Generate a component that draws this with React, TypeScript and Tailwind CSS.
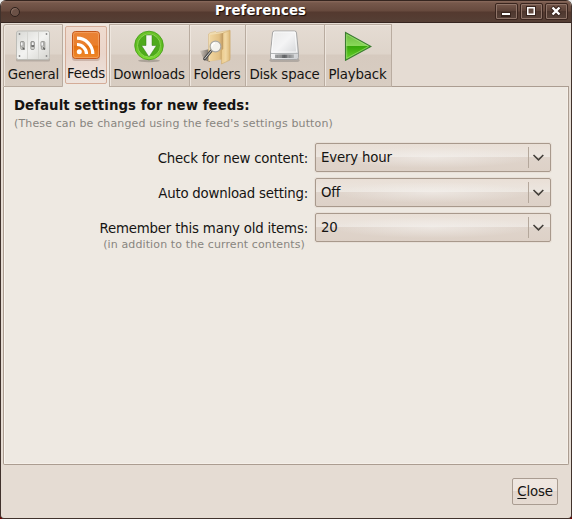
import React from "react";

function SwitchesIcon() {
  return (
    <svg width="36" height="34" viewBox="0 0 36 34" className="block">
      <defs>
        <linearGradient id="plate" x1="0" y1="0" x2="1" y2="1">
          <stop offset="0" stopColor="#d8d8d4" />
          <stop offset=".5" stopColor="#f3f3f1" />
          <stop offset="1" stopColor="#d4d4cf" />
        </linearGradient>
      </defs>
      <rect x="1" y="29" width="34" height="3.500" rx="1.5" fill="#8d8780" opacity=".45" />
      <rect x="1.5" y="2" width="33" height="28.500" rx="2" fill="url(#plate)" stroke="#bdbdb8" />
      <path d="M12.500 3v27M23.500 3v27" stroke="#d6d6d2" />
      {[7.5, 17.5, 28].map((x, i) => (
        <g key={x}>
          <rect x={x - 1.7} y="12.500" width="3.500" height="8" rx="1" fill="#d0d0cc" stroke="#8b8b88" strokeWidth=".8" />
          <rect x={i === 1 ? x - 1 : x - 2} y="13" width="2.500" height="4" fill="#f4f4f4" stroke="#858582" strokeWidth=".6" />
          <path d={i === 1 ? `M${x - 1} 17h2.500` : `M${x} 18.500l2 2`} stroke="#5c5c5a" strokeWidth="1.300" />
        </g>
      ))}
      {[4.5, 31.5].map((x) =>
        [5, 27].map((y) => <circle key={`${x}-${y}`} cx={x} cy={y} r=".9" fill="#888" />)
      )}
    </svg>
  );
}

function FeedIcon() {
  return (
    <svg width="30" height="32" viewBox="0 0 30 32" className="block">
      <defs>
        <linearGradient id="rss" x1="0" y1="0" x2="0" y2="1">
          <stop offset="0" stopColor="#e98235" />
          <stop offset=".5" stopColor="#ea7f2c" />
          <stop offset=".55" stopColor="#e5700f" />
          <stop offset="1" stopColor="#f08a2c" />
        </linearGradient>
      </defs>
      <rect x="1" y="3" width="28" height="28" rx="3" fill="#a08070" opacity=".4" />
      <rect x="1.500" y="1.500" width="27" height="27" rx="3" fill="url(#rss)" stroke="#c4591b" />
      <rect x="2.500" y="2.500" width="25" height="25" rx="2" fill="none" stroke="#f7ad74" opacity=".6" />
      <circle cx="8.300" cy="21.800" r="2.500" fill="#fff" />
      <path d="M6 14.500a9.500 9.500 0 0 1 9.500 9.500M6 8.200a15.800 15.800 0 0 1 15.800 15.800" fill="none" stroke="#fff" strokeWidth="3.200" />
    </svg>
  );
}

function DownloadIcon() {
  return (
    <svg width="32" height="34" viewBox="0 0 32 34" className="block">
      <defs>
        <linearGradient id="disc" x1="0" y1="0" x2="0" y2="1">
          <stop offset="0" stopColor="#6fc52c" />
          <stop offset=".5" stopColor="#5fbd20" />
          <stop offset="1" stopColor="#83df35" />
        </linearGradient>
      </defs>
      <ellipse cx="16" cy="31.800" rx="11" ry="1.500" fill="#6c675f" opacity=".4" />
      <circle cx="16" cy="16.500" r="14.300" fill="url(#disc)" stroke="#3d9b12" strokeWidth=".8" />
      <circle cx="16" cy="16.500" r="11.500" fill="#4eaa1b" stroke="#8bd451" strokeWidth="1" />
      <path d="M13 6h6v10.500h4.500L16 28 8.500 16.500H13z" fill="#f5f5f2" stroke="#317f12" strokeWidth=".5" />
    </svg>
  );
}

function FolderIcon() {
  return (
    <svg width="34" height="36" viewBox="0 0 34 36" className="block">
      <defs>
        <linearGradient id="folder" x1="0" y1="0" x2="1" y2="0">
          <stop offset="0" stopColor="#eccb8d" />
          <stop offset=".5" stopColor="#f1d8a5" />
          <stop offset="1" stopColor="#dcb878" />
        </linearGradient>
        <linearGradient id="inside" x1="0" y1="0" x2="1" y2="0">
          <stop offset="0" stopColor="#f0d59f" />
          <stop offset=".7" stopColor="#e2c084" />
          <stop offset="1" stopColor="#bd9863" />
        </linearGradient>
        <linearGradient id="cast" x1="0" y1="0" x2="1" y2="0">
          <stop offset="0" stopColor="#514b43" stopOpacity=".1" />
          <stop offset="1" stopColor="#514b43" stopOpacity=".8" />
        </linearGradient>
      </defs>
      <path d="M0 22l10-2v13l-6-2z" fill="url(#cast)" />
      <path d="M8.500 5l2-1.500 5-1 1 1 13.500-2.300v28l-21.500 3z" fill="#f0dcb0" stroke="#d2b27c" strokeWidth=".5" />
      <path d="M10 6l13-2v26l-13 2z" fill="url(#inside)" />
      <path d="M23 4l7-2.500v29.500l-8.500 4V21l1.500-1z" fill="url(#folder)" stroke="#c9a566" strokeWidth=".5" />
      <path d="M11.500 21.500l-7 8.500" stroke="#4a4a49" strokeWidth="2.800" strokeLinecap="round" />
      <path d="M11.500 21.500l-7 8.500" stroke="#d5d5d3" strokeWidth="1" />
      <circle cx="15.500" cy="17.500" r="5.400" fill="#f4f2ed" stroke="#aaa8a2" strokeWidth="1.200" />
      <path d="M12 17.500a3.500 3.500 0 0 1 3-3.500" stroke="#fff" fill="none" strokeWidth="1.500" />
    </svg>
  );
}

function DiskIcon() {
  return (
    <svg width="34" height="34" viewBox="0 0 34 34" className="block">
      <defs>
        <linearGradient id="disk" x1="0" y1="0" x2="1" y2="1">
          <stop offset="0" stopColor="#e9e9e9" />
          <stop offset=".45" stopColor="#f4f4f5" />
          <stop offset="1" stopColor="#cbcdd0" />
        </linearGradient>
        <linearGradient id="slot" x1="0" y1="0" x2="1" y2="0">
          <stop offset="0" stopColor="#a0a2a4" />
          <stop offset=".5" stopColor="#606265" />
          <stop offset="1" stopColor="#b2b4b5" />
        </linearGradient>
      </defs>
      <rect x="1.500" y="29.500" width="30" height="3.500" rx="2" fill="#696969" opacity=".35" />
      <path d="M4.500 4q0-2 2-2h20q2 0 2 2l2 20v4.500q0 2-2 2H4.500q-2 0-2-2V24z" fill="url(#disk)" stroke="#a6a6a6" />
      <path d="M5.700 4q0-1 1-1h19.500q1 0 1 1l1.500 19h-25z" fill="none" stroke="#fff" opacity=".75" />
      <path d="M3 24.500h27" stroke="#b2b5b7" />
      <rect x="7" y="25.500" width="19" height="3.500" fill="url(#slot)" />
      <path d="M11 25.500v3.500M13 25.500v3.500M20 25.500v3.500" stroke="#bbb" strokeWidth=".7" />
    </svg>
  );
}

function PlayIcon() {
  return (
    <svg width="28" height="32" viewBox="0 0 28 32" className="block">
      <defs>
        <linearGradient id="play" x1="0" y1="0" x2="0" y2="1">
          <stop offset="0" stopColor="#65b83a" />
          <stop offset=".48" stopColor="#8bd95a" />
          <stop offset=".5" stopColor="#37a809" />
          <stop offset="1" stopColor="#6ad42f" />
        </linearGradient>
      </defs>
      <path d="M1.500 3.500L27 17.500 1.500 31.300z" fill="url(#play)" stroke="#3c7b32" strokeWidth="1.100" />
      <path d="M2.700 5.500L24.500 17.500 2.700 29.300z" fill="none" stroke="#a6e17e" strokeWidth=".8" opacity=".8" />
    </svg>
  );
}

const tabs = [
  { label: "Downloads", icon: <DownloadIcon />, width: "w-[80px]" },
  { label: "Folders", icon: <FolderIcon />, width: "w-[56px]" },
  { label: "Disk space", icon: <DiskIcon />, width: "w-[79px]" },
  { label: "Playback", icon: <PlayIcon />, width: "w-[67px]" },
];

function Tab({ label, icon, width, first = false }: { label: string; icon: React.ReactNode; width: string; first?: boolean }) {
  return (
    <div className={`${width} ${first ? "border-l rounded-tl-[3px]" : "pr-px"} h-[63px] shrink-0 border-t border-r border-b border-[#b9aca0] bg-[linear-gradient(#e5dcd3_0,#ded4ca_29px,#d6cabf_30px,#d8cdc2_62px)] shadow-[inset_1px_1px_0_#eee6de] flex flex-col items-center`}>
      <div className="h-[42px] pt-[4px]">{icon}</div>
      <div className={first ? "leading-[16px] pl-px" : "leading-[16px]"}>{label}</div>
    </div>
  );
}

function Combo({ value }: { value: string }) {
  return (
    <div className="w-[236px] h-[29px] rounded-[2px] border border-[#a8998c] bg-[linear-gradient(#e9dfd6,#ece6e0_48%,#dfd4cb_50%,#ddd1c7)] shadow-[0_0_0_1px_#e8e0d8] flex">
      <div className="flex-1 my-px bg-[radial-gradient(ellipse_at_55%_50%,#f5f2ef99,#f5f2ef00_60%)] pl-[5px] leading-[25px]">{value}</div>
      <div className="w-[22px] flex items-center">
        <span className="h-[21px] w-px bg-[#b4a79b]" />
        <svg width="12" height="8" viewBox="0 0 12 8" className="ml-[3px]">
          <path d="M1.500 1L6.500 5.900 11.300 1" fill="none" stroke="#44403b" strokeWidth="1.600" />
        </svg>
      </div>
    </div>
  );
}

function WindowButton({ children }: { children: React.ReactNode }) {
  return (
    <div className="w-[23px] h-[17px] rounded-[2px] border border-[#3a251e] bg-[linear-gradient(#76584b,#5b4137_48%,#4e372e_50%,#58433a)] shadow-[inset_0_0_0_1px_#8f7468]">
      <svg width="21" height="15" viewBox="0 0 21 15" className="block">{children}</svg>
    </div>
  );
}

export default function App() {
  return (
    <div className="w-[572px] h-[519px] bg-[linear-gradient(#eee_50%,#700_50%)] overflow-hidden font-['DejaVu_Sans',sans-serif] text-[13.33px] tracking-[-0.18px] text-[#151412] whitespace-nowrap">
      <div className="h-full rounded-t-[6px] rounded-b-[4px] border-x border-b border-[#40322c] bg-[#e5dcd3] flex flex-col overflow-hidden">
        <div className="h-[23px] shrink-0 border-t border-b border-[#35251f] bg-[linear-gradient(#8a6b5d_0,#76584b_2px,#674a3e_10px,#54392f_11px,#553f35_21px)] flex items-center">
          <span className="ml-[9px] w-[10px] h-[10px] rounded-full border border-[#2e211c] bg-[#6b5146] shadow-[inset_1px_1px_#8b7063]" />
          <div className="flex-1 text-center font-bold text-white leading-[20px] pb-px tracking-[0.08px] [text-shadow:1px_1px_1px_#160b07]">
            <span className="ml-[6px]">Preferences</span>
          </div>
          <div className="flex gap-[2px] pr-[3px]">
            <WindowButton>
              <path d="M5 8h10v5H5z" fill="#38241d" /><path d="M6 9h8v2H6z" fill="white" />
            </WindowButton>
            <WindowButton>
              <path d="M5 2h10v10H5z" fill="#38241d" /><path d="M6.750 3.750h6.500v6.500h-6.500z" fill="#60483e" stroke="white" strokeWidth="1.500" />
            </WindowButton>
            <WindowButton>
              <path d="M6 3l8 8M14 3l-8 8" stroke="#38241d" strokeWidth="4.500" /><path d="M6.500 3.500l7 7M13.500 3.500l-7 7" stroke="white" strokeWidth="2.400" />
            </WindowButton>
          </div>
        </div>
        <div className="h-[64px] shrink-0 pl-[2px] pt-px flex">
          <Tab label="General" icon={<SwitchesIcon />} width="w-[60px]" first />
          <div className="w-[47px] h-[63px] shrink-0 border-r border-[#b9aca0] bg-[linear-gradient(#efe5dd,#eee9e2)] px-[2px] pt-[2px]">
            <div className="h-[58px] border border-[#d4ac98] rounded-[2px] bg-[linear-gradient(#efdbcf_0,#ead5ca_27px,#e9d6cc_28px,#eee4dd_56px)] flex flex-col items-center">
              <div className="h-[39px] pt-[3px]"><FeedIcon /></div>
              <div className="leading-[16px]">Feeds</div>
            </div>
          </div>
          {tabs.map((t) => <Tab key={t.label} {...t} />)}
          <div className="flex-1 mr-[2px] h-[63px] border-b border-[#ab9d91]" />
        </div>
        <main className="mx-[2px] h-[378px] shrink-0 border-x border-b border-[#ab9d91] rounded-b-[2px] bg-[#eee9e2] shadow-[inset_1px_0_0_#faf6f0,inset_-1px_-1px_0_#f5efe8]">
          <div className="pl-[10px] pt-[10px]">
            <h1 className="font-bold leading-[18px] tracking-[0.05px]">Default settings for new feeds:</h1>
            <p className="mt-px text-[11px] leading-[16px] tracking-[0.135px] text-[#88857f]">(These can be changed using the feed's settings button)</p>
          </div>
          <div className="mt-[11px] pr-[17px] flex flex-col gap-[6px]">
            <div className="flex h-[29px] justify-end gap-[7px]"><label className="leading-[31px] tracking-[-0.22px]">Check for new content:</label><Combo value="Every hour" /></div>
            <div className="flex h-[29px] justify-end gap-[7px]"><label className="leading-[31px] tracking-[-0.22px]">Auto download setting:</label><Combo value="Off" /></div>
            <div className="flex justify-end gap-[7px]">
              <div className="text-right">
                <label className="block h-[23px] leading-[31px]">Remember this many old items:</label>
                <p className="pr-[3px] pt-px text-[11px] leading-[16px] tracking-[0.115px] text-[#88857f]">(in addition to the current contents)</p>
              </div>
              <Combo value="20" />
            </div>
          </div>
        </main>
        <footer className="pt-[13px] pr-[13px] flex justify-end">
          <button className="w-[46px] h-[27px] rounded-[2px] border border-[#a99c91] bg-[linear-gradient(#efe7e0,#eee5df_48%,#e2d7ce_50%,#e6dbd2)] leading-[24px] tracking-[-0.2px]"><span className="underline underline-offset-2">C</span>lose</button>
        </footer>
      </div>
    </div>
  );
}
